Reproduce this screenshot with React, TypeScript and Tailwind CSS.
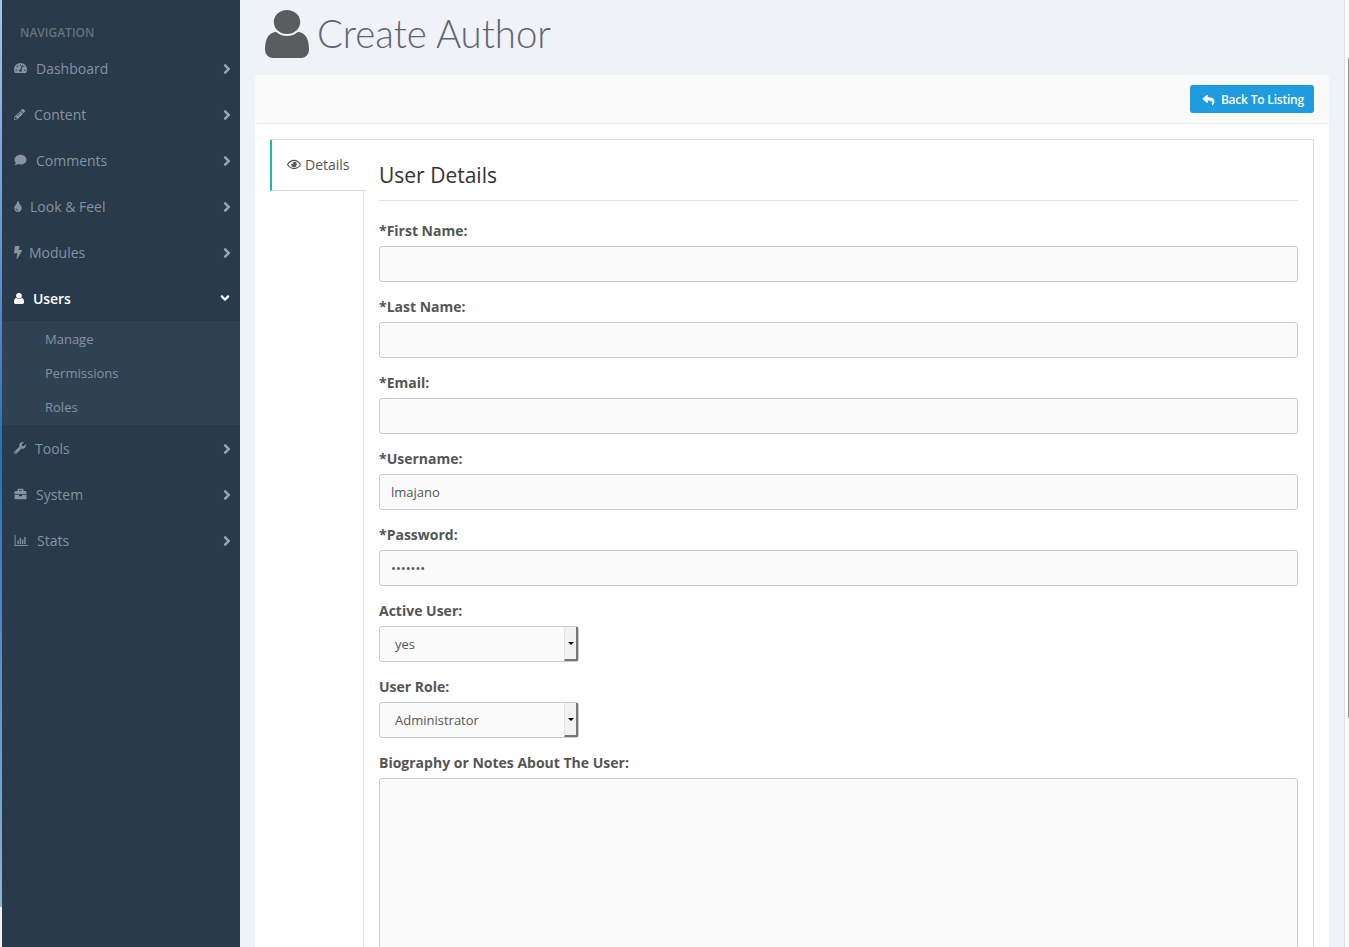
import React from "react";
import { FaTachometerAlt, FaPencilAlt, FaComment, FaTint, FaBolt, FaWrench, FaBriefcase, FaReply, FaAngleRight, FaAngleDown, FaRegEye } from "react-icons/fa";

function UserIcon({ className }: { className?: string }) {
  return (
    <svg viewBox="256 128 1280 1536" preserveAspectRatio="none" fill="currentColor" className={className}>
      <path d="M1536 1399q0 109-62.5 187t-150.5 78h-854q-88 0-150.5-78t-62.5-187q0-85 8.5-160.5t31.5-151.5 58.5-130 94-88.5 134.5-34.5q131 128 313 128t313-128q76 0 134.5 34.5t94 88.5 58.5 130 31.5 151.5 8.5 160.5zm-256-887q0 159-112.5 271.5t-271.5 112.5-271.5-112.5-112.5-271.5 112.5-271.5 271.5-112.5 271.5 112.5 112.5 271.5z" />
    </svg>
  );
}

function StatsIcon({ className }: { className?: string }) {
  return (
    <svg viewBox="0 0 15 12" fill="currentColor" className={className}>
      <rect x="0" y="0" width="1" height="12" />
      <rect x="0" y="11" width="15" height="1" />
      <rect x="3" y="6" width="1.5" height="4" />
      <rect x="5.5" y="3" width="1.5" height="7" />
      <rect x="8" y="5" width="1.5" height="5" />
      <rect x="10.5" y="2" width="1.5" height="8" />
    </svg>
  );
}

type IconType = React.ComponentType<{ className?: string }>;

function NavRow({ label, Icon, box, size }: { label: string; Icon: IconType; box: string; size: string }) {
  return (
    <div className="flex h-[46px] items-center justify-between pr-[8px] pl-3 text-[14px] text-[#8493a3]">
      <div className="flex items-center">
        <div className={`flex shrink-0 items-center ${box}`}>
          <Icon className={`${size} text-[#8793a0]`} />
        </div>
        <span>{label}</span>
      </div>
      <FaAngleRight className="mt-[2px] h-[16px] w-[10px] text-[#98a4b0]" />
    </div>
  );
}

function Field({ label, value }: { label: string; value?: string }) {
  return (
    <div className="mb-[15px]">
      <div className="mb-[5px] h-[20px] text-[14px] leading-[20px] font-bold text-[#555]">{label}</div>
      <div className="flex h-[36px] items-center rounded-[3px] border border-[#ccc] bg-[#fafafa] px-[11px] pt-[1px] text-[13px] text-[#555]">{value}</div>
    </div>
  );
}

function SelectBox({ label, value }: { label: string; value: string }) {
  return (
    <div className="mb-[15px]">
      <div className="mb-[5px] h-[20px] text-[14px] leading-[20px] font-bold text-[#555]">{label}</div>
      <div className="flex h-[36px] w-[200px] items-center justify-between rounded-[3px] border border-[#ccc] bg-[#fafafa] pl-[15px] text-[13px] text-[#555]">
        <span className="pt-[2px]">{value}</span>
        <div className="flex h-[34px] w-[14px] items-center justify-center border-r-2 border-b-2 border-l border-r-[#777] border-b-[#777] border-l-[#e5e5e5] bg-[#f2f2f2]">
          <div className="h-0 w-0 border-x-[3px] border-t-[3px] border-x-transparent border-t-black" />
        </div>
      </div>
    </div>
  );
}

export default function App() {
  return (
    <div className="flex h-[947px] w-[1349px] overflow-hidden bg-[#f0f2f7] font-['Open_Sans',sans-serif]">
      <div className="h-[907px] w-[2px] shrink-0 bg-gradient-to-b from-[#a9c6e4] via-[#2f6db0] to-[#8fb5cf]" />
      <aside className="h-full w-[238px] shrink-0 bg-[#293a4a]">
        <div className="pt-[25px] pl-[18px] text-[12px] leading-[16px] font-semibold text-[#65727f]">NAVIGATION</div>
        <div className="mt-[4px]">
          <NavRow label="Dashboard" Icon={FaTachometerAlt} box="w-[22px]" size="h-[12px] w-[13px]" />
          <NavRow label="Content" Icon={FaPencilAlt} box="w-[20px]" size="h-[11px] w-[11px]" />
          <NavRow label="Comments" Icon={FaComment} box="w-[22px]" size="h-[12px] w-[13px]" />
          <NavRow label="Look & Feel" Icon={FaTint} box="w-[16px]" size="h-[11px] w-[8px]" />
          <NavRow label="Modules" Icon={FaBolt} box="w-[15px]" size="h-[13px] w-[8px]" />
          <div className="flex h-[46px] items-center justify-between pr-[9px] pl-3 text-[14px] font-semibold tracking-[-0.1px] text-white">
            <div className="flex items-center">
              <div className="w-[19px] shrink-0">
                <UserIcon className="h-[11px] w-[10px]" />
              </div>
              <span>Users</span>
            </div>
            <FaAngleDown className="h-[14px] w-[12px]" />
          </div>
          <div className="h-[104px] bg-[#2f4254] pt-[2px] pl-[43px] text-[13px] text-[#8493a3]">
            <div className="flex h-[34px] items-center">Manage</div>
            <div className="flex h-[34px] items-center">Permissions</div>
            <div className="flex h-[34px] items-center">Roles</div>
          </div>
          <NavRow label="Tools" Icon={FaWrench} box="w-[21px]" size="h-[12px] w-[12px]" />
          <NavRow label="System" Icon={FaBriefcase} box="w-[22px]" size="h-[12px] w-[13px]" />
          <NavRow label="Stats" Icon={StatsIcon} box="w-[23px]" size="h-[11px] w-[15px]" />
        </div>
      </aside>
      <main className="min-w-0 flex-1 pl-[15px]">
        <div className="flex h-[75px] items-start pt-[10px] pl-[10px]">
          <UserIcon className="h-[48px] w-[44px] text-[#5b5c60]" />
          <h1 className="ml-[8px] font-['Lato',sans-serif] text-[38.4px] leading-[46px] font-light text-[#5f6670]">Create Author</h1>
        </div>
        <div className="h-[872px] w-[1074px] overflow-hidden rounded-t-[3px] bg-white">
          <div className="flex h-[49px] items-start justify-end border-b border-[#eee] bg-[#fafafa] pt-[10px] pr-[15px]">
            <div className="flex h-[28px] items-center gap-[6px] rounded-[3px] bg-[#1f9be0] pt-[1px] pr-[10px] pl-[12px] text-[12px] font-semibold tracking-[-0.2px] text-white">
              <FaReply className="h-[12px] w-[13px]" />
              <span>Back To Listing</span>
            </div>
          </div>
          <div className="mx-[15px] mt-[15px] flex h-[900px] border-t border-r border-[#ddd]">
            <div className="w-[94px] shrink-0 border-r border-[#ddd]">
              <div className="relative -mr-[3px] flex h-[51px] items-center gap-[4px] border-b border-l-2 border-b-[#ddd] border-l-[#1abc9c] bg-white pb-[2px] pl-[15px] text-[14px] text-[#555]">
                <FaRegEye className="h-[13px] w-[14px] text-[#555]" />
                <span>Details</span>
              </div>
            </div>
            <div className="min-w-0 flex-1 pr-[15px] pl-[15px]">
              <h2 className="mt-[20px] mb-[20px] border-b border-[#e5e5e5] pb-[10px] text-[21px] leading-[30px] font-normal text-[#333]">User Details</h2>
              <Field label="*First Name:" />
              <Field label="*Last Name:" />
              <Field label="*Email:" />
              <Field label="*Username:" value="lmajano" />
              <Field label="*Password:" value="•••••••" />
              <SelectBox label="Active User:" value="yes" />
              <SelectBox label="User Role:" value="Administrator" />
              <div className="mb-[5px] h-[20px] text-[14px] leading-[20px] font-bold text-[#555]">Biography or Notes About The User:</div>
              <div className="h-[300px] rounded-[3px] border border-[#ccc] bg-[#fafafa]" />
            </div>
          </div>
        </div>
      </main>
      <div className="relative h-full w-[5px] shrink-0 border-l border-[#dde0e6] bg-[#fdfdfd]">
        <div className="absolute top-[58px] left-[3px] h-[660px] w-[1px] bg-[#999]" />
      </div>
    </div>
  );
}
